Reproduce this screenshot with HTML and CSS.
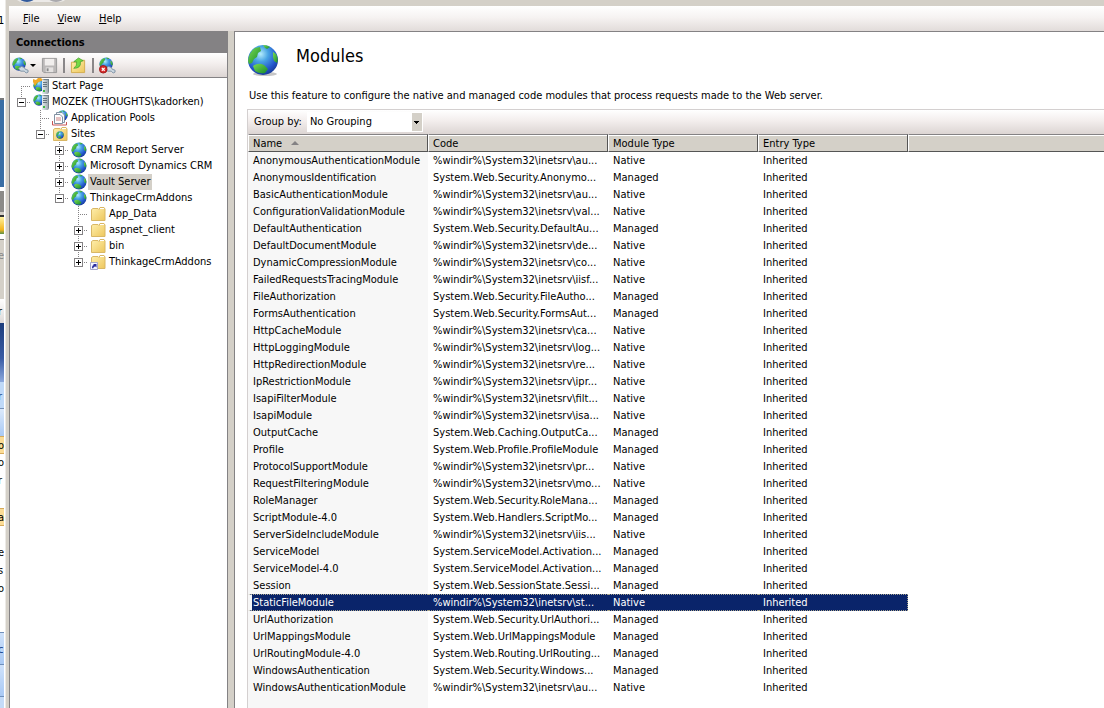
FILE: index.html
```
<!DOCTYPE html>
<html lang="en">
<head>
<meta charset="utf-8">
<title>Modules</title>
<link rel="stylesheet" href="styles.css">
</head>
<body>
<svg class="defs" aria-hidden="true">
  <defs>
    <radialGradient id="sea" cx="0.42" cy="0.3" r="0.72">
      <stop offset="0" stop-color="#b4ecfc"/><stop offset="0.35" stop-color="#48a4e4"/><stop offset="0.75" stop-color="#2456cc"/><stop offset="1" stop-color="#173a96"/>
    </radialGradient>
    <linearGradient id="land" x1="0" y1="0" x2="1" y2="1">
      <stop offset="0" stop-color="#7bdc52"/><stop offset="1" stop-color="#168a2c"/>
    </linearGradient>
    <linearGradient id="paper" x1="0" y1="0" x2="1" y2="1">
      <stop offset="0" stop-color="#fff0ae"/><stop offset="1" stop-color="#edc65c"/>
    </linearGradient>
    <linearGradient id="metal" x1="0" y1="0" x2="1" y2="0">
      <stop offset="0" stop-color="#e9eef0"/><stop offset="1" stop-color="#9fabb1"/>
    </linearGradient>
    <symbol id="globe" viewBox="0 0 32 32">
      <circle cx="16" cy="16" r="15" fill="url(#sea)"/>
      <path d="M1 17Q2 8 8 4L13 3 14 7 11 9 10 13 7 15 5 19 2 20Z" fill="url(#land)"/>
      <path d="M16 1Q20 1 23 3L20 5 18 4Z" fill="url(#land)"/>
      <path d="M26 8L29 10Q32 15 30 19L27 17 26 13Z" fill="url(#land)"/>
      <path d="M6 22Q11 18 17 21L21 25 18 29Q12 30 8 27Z" fill="url(#land)"/>
    </symbol>
    <symbol id="server" viewBox="0 0 16 16">
      <path d="M9 2L11 1H16V14L15 16H9Z" fill="#75838c"/>
      <path d="M9 2H15V16H9Z" fill="url(#metal)"/>
      <path d="M10 4.500H14M10 6.500H14M10 8.500H14" stroke="#66757e"/>
      <path d="M10 13H12" stroke="#3eb843" stroke-width="2"/>
    </symbol>
    <symbol id="folder" viewBox="0 0 16 16">
      <path d="M1.500 3.500L3 2.500H8L9 3.500 10 1.500H14L15 3V14.500H1.500Z" fill="url(#paper)" stroke="#d9b765"/>
      <path d="M10 2.500H14" stroke="#fff"/>
    </symbol>
    <symbol id="start" viewBox="0 0 16 16">
      <use href="#globe" y="1" width="13" height="13"/>
      <path d="M0 4L0 1 3 2 5 0 8 0 11 3 8 3 4 5 2 8Z" fill="#f0aa29"/>
      <use href="#server" width="16" height="16"/>
    </symbol>
    <symbol id="host" viewBox="0 0 16 16">
      <use href="#globe" width="12" height="12"/><use href="#server" width="16" height="16"/>
    </symbol>
    <symbol id="pools" viewBox="0 0 16 16">
      <use href="#globe" x="5" width="11" height="11"/>
      <path d="M4.500 2.500H10L12.500 5V12.500H4.500Z" fill="#f4f8fc" stroke="#8292a3"/>
      <path d="M2.500 4.500H8L10.500 7V13.500H2.500Z" fill="#fff" stroke="#8292a3"/>
      <path d="M4 8H9M4 10H9" stroke="#cf8585"/>
      <path d="M.5 11V15H14.500V12" fill="none" stroke="#c85454"/>
    </symbol>
    <symbol id="sites" viewBox="0 0 16 16">
      <use href="#folder" width="16" height="16"/><use href="#globe" x="4" y="5" width="8" height="8"/>
    </symbol>
    <symbol id="shortcut" viewBox="0 0 16 16">
      <use href="#folder" width="16" height="16"/>
      <path d="M.5 8.500H7.500V15.500H.5Z" fill="#f4f4ff" stroke="#a5a5c8"/>
      <path d="M2 14Q2 11 4 11L3 10H6.500V13.500L5.500 12.500Q4 12 3 14.500Z" fill="#2a2b9c"/>
    </symbol>
    <symbol id="connect" viewBox="0 0 18 18">
      <use href="#globe" width="15" height="15"/>
      <path d="M7 12L10 10 13 11 14 13 17 14 17 16 15 17 13 15 9 15Z" fill="#ccd8e2" stroke="#7f94a6"/>
    </symbol>
    <symbol id="disconnect" viewBox="0 0 18 18">
      <use href="#connect" width="18" height="18"/>
      <circle cx="4.500" cy="13" r="4" fill="#d82c2c" stroke="#9c1717"/>
      <path d="M3 11.500L6 14.500M6 11.500L3 14.500" stroke="#fff" stroke-width="1.300"/>
    </symbol>
    <symbol id="save" viewBox="0 0 18 18">
      <path d="M1.500 1.500H16.500V16.500H3L1.500 15Z" fill="#bbb8b8" stroke="#999"/>
      <path d="M4 2H14V9H4Z" fill="#f1eeed"/><path d="M5 11H13V16H5Z" fill="#e5e2e1"/><path d="M6 12H8V15H6Z" fill="#888"/>
    </symbol>
    <symbol id="up" viewBox="0 0 18 18">
      <path d="M1.500 5.500H7L8 3.500H15.500V16.500H1.500Z" fill="url(#paper)" stroke="#d3ac4c"/>
      <path d="M4 12Q8 9 7 5H4L9 1 14 4 11 5Q12 12 4 12Z" fill="#74d944" stroke="#3a9a26" stroke-width=".7"/>
    </symbol>
  </defs>
</svg>
<div class="desktop">
  <div class="behind" aria-hidden="true">
    <div class="b-top">1</div><div class="b-blue"></div><div class="b-grey"></div><div class="b-dark"></div><div class="b-yellow"></div><div class="b-beige">e</div><div class="b-pale">r</div><div class="b-navy"></div><div class="b-sky">r</div><div class="b-sky2"></div><div class="b-gold">o</div><div class="b-line">o</div><div class="b-line">r</div><div class="b-fill"></div><div class="b-gold">a</div><div class="b-fill"></div><div class="b-line">e</div><div class="b-line">s</div><div class="b-line">o</div><div class="b-gap"></div><div class="b-tail">c</div><div class="b-tail"></div><div class="b-rest"></div>
  </div>
  <div class="window">
    <div class="caption"><svg viewBox="0 0 56 6" aria-hidden="true"><path d="M8 0H56Q54 2 48 2H14Q10 2 8 0Z" fill="#eceae8"/><ellipse cx="18" cy="-3" rx="8" ry="5" fill="#315a9c"/><ellipse cx="47" cy="-3" rx="8" ry="5" fill="#aaa9ad"/></svg></div>
    <nav class="menu">
      <button type="button"><u>F</u>ile</button><button type="button"><u>V</u>iew</button><button type="button"><u>H</u>elp</button>
    </nav>
    <div class="panes">
      <aside class="connections">
        <h2>Connections</h2>
        <div class="tools">
          <button type="button" class="drop" aria-label="Connect"><svg><use href="#connect"/></svg></button>
          <button type="button" aria-label="Save" disabled><svg><use href="#save"/></svg></button>
          <i></i>
          <button type="button" aria-label="Up"><svg><use href="#up"/></svg></button>
          <i></i>
          <button type="button" aria-label="Disconnect"><svg><use href="#disconnect"/></svg></button>
        </div>
        <ul class="tree">
          <li><span class="g first"></span><svg><use href="#start"/></svg><span class="label">Start Page</span></li>
          <li><span class="g last"><button type="button" class="minus" aria-label="Collapse"></button></span><svg><use href="#host"/></svg><span class="label">MOZEK (THOUGHTS\kadorken)</span></li>
          <li class="l1"><span class="g"></span><svg><use href="#pools"/></svg><span class="label">Application Pools</span></li>
          <li class="l1"><span class="g last"><button type="button" class="minus" aria-label="Collapse"></button></span><svg><use href="#sites"/></svg><span class="label">Sites</span></li>
          <li class="l2"><span class="g"><button type="button" class="plus" aria-label="Expand"></button></span><svg><use href="#globe"/></svg><span class="label">CRM Report Server</span></li>
          <li class="l2"><span class="g"><button type="button" class="plus" aria-label="Expand"></button></span><svg><use href="#globe"/></svg><span class="label">Microsoft Dynamics CRM</span></li>
          <li class="l2"><span class="g"><button type="button" class="plus" aria-label="Expand"></button></span><svg><use href="#globe"/></svg><span class="label current">Vault Server</span></li>
          <li class="l2"><span class="g last"><button type="button" class="minus" aria-label="Collapse"></button></span><svg><use href="#globe"/></svg><span class="label">ThinkageCrmAddons</span></li>
          <li class="l3"><span class="g"></span><svg><use href="#folder"/></svg><span class="label">App_Data</span></li>
          <li class="l3"><span class="g"><button type="button" class="plus" aria-label="Expand"></button></span><svg><use href="#folder"/></svg><span class="label">aspnet_client</span></li>
          <li class="l3"><span class="g"><button type="button" class="plus" aria-label="Expand"></button></span><svg><use href="#folder"/></svg><span class="label">bin</span></li>
          <li class="l3"><span class="g last"><button type="button" class="plus" aria-label="Expand"></button></span><svg><use href="#shortcut"/></svg><span class="label">ThinkageCrmAddons</span></li>
        </ul>
      </aside>
      <main class="feature">
        <header><svg viewBox="0 0 32 34" aria-hidden="true"><ellipse cx="18" cy="30" rx="12" ry="2" fill="#c6c6c6"/><use href="#globe" width="32" height="32"/></svg><h1>Modules</h1></header>
        <p>Use this feature to configure the native and managed code modules that process requests made to the Web server.</p>
        <section class="list">
          <div class="group"><label for="grouping">Group by:</label><select id="grouping"><option>No Grouping</option></select></div>
          <table>
            <colgroup><col class="c-name"><col class="c-code"><col class="c-type"><col class="c-type"><col></colgroup>
            <thead><tr><th>Name<span class="sort"></span></th><th>Code</th><th>Module Type</th><th>Entry Type</th><th></th></tr></thead>
            <tbody>
              <tr><td>AnonymousAuthenticationModule</td><td>%windir%\System32\inetsrv\au...</td><td>Native</td><td>Inherited</td></tr>
              <tr><td>AnonymousIdentification</td><td>System.Web.Security.Anonymo...</td><td>Managed</td><td>Inherited</td></tr>
              <tr><td>BasicAuthenticationModule</td><td>%windir%\System32\inetsrv\au...</td><td>Native</td><td>Inherited</td></tr>
              <tr><td>ConfigurationValidationModule</td><td>%windir%\System32\inetsrv\val...</td><td>Native</td><td>Inherited</td></tr>
              <tr><td>DefaultAuthentication</td><td>System.Web.Security.DefaultAu...</td><td>Managed</td><td>Inherited</td></tr>
              <tr><td>DefaultDocumentModule</td><td>%windir%\System32\inetsrv\de...</td><td>Native</td><td>Inherited</td></tr>
              <tr><td>DynamicCompressionModule</td><td>%windir%\System32\inetsrv\co...</td><td>Native</td><td>Inherited</td></tr>
              <tr><td>FailedRequestsTracingModule</td><td>%windir%\System32\inetsrv\iisf...</td><td>Native</td><td>Inherited</td></tr>
              <tr><td>FileAuthorization</td><td>System.Web.Security.FileAutho...</td><td>Managed</td><td>Inherited</td></tr>
              <tr><td>FormsAuthentication</td><td>System.Web.Security.FormsAut...</td><td>Managed</td><td>Inherited</td></tr>
              <tr><td>HttpCacheModule</td><td>%windir%\System32\inetsrv\ca...</td><td>Native</td><td>Inherited</td></tr>
              <tr><td>HttpLoggingModule</td><td>%windir%\System32\inetsrv\log...</td><td>Native</td><td>Inherited</td></tr>
              <tr><td>HttpRedirectionModule</td><td>%windir%\System32\inetsrv\re...</td><td>Native</td><td>Inherited</td></tr>
              <tr><td>IpRestrictionModule</td><td>%windir%\System32\inetsrv\ipr...</td><td>Native</td><td>Inherited</td></tr>
              <tr><td>IsapiFilterModule</td><td>%windir%\System32\inetsrv\filt...</td><td>Native</td><td>Inherited</td></tr>
              <tr><td>IsapiModule</td><td>%windir%\System32\inetsrv\isa...</td><td>Native</td><td>Inherited</td></tr>
              <tr><td>OutputCache</td><td>System.Web.Caching.OutputCa...</td><td>Managed</td><td>Inherited</td></tr>
              <tr><td>Profile</td><td>System.Web.Profile.ProfileModule</td><td>Managed</td><td>Inherited</td></tr>
              <tr><td>ProtocolSupportModule</td><td>%windir%\System32\inetsrv\pr...</td><td>Native</td><td>Inherited</td></tr>
              <tr><td>RequestFilteringModule</td><td>%windir%\System32\inetsrv\mo...</td><td>Native</td><td>Inherited</td></tr>
              <tr><td>RoleManager</td><td>System.Web.Security.RoleMana...</td><td>Managed</td><td>Inherited</td></tr>
              <tr><td>ScriptModule-4.0</td><td>System.Web.Handlers.ScriptMo...</td><td>Managed</td><td>Inherited</td></tr>
              <tr><td>ServerSideIncludeModule</td><td>%windir%\System32\inetsrv\iis...</td><td>Native</td><td>Inherited</td></tr>
              <tr><td>ServiceModel</td><td>System.ServiceModel.Activation...</td><td>Managed</td><td>Inherited</td></tr>
              <tr><td>ServiceModel-4.0</td><td>System.ServiceModel.Activation...</td><td>Managed</td><td>Inherited</td></tr>
              <tr><td>Session</td><td>System.Web.SessionState.Sessi...</td><td>Managed</td><td>Inherited</td></tr>
              <tr class="selected"><td>StaticFileModule</td><td>%windir%\System32\inetsrv\st...</td><td>Native</td><td>Inherited</td></tr>
              <tr><td>UrlAuthorization</td><td>System.Web.Security.UrlAuthori...</td><td>Managed</td><td>Inherited</td></tr>
              <tr><td>UrlMappingsModule</td><td>System.Web.UrlMappingsModule</td><td>Managed</td><td>Inherited</td></tr>
              <tr><td>UrlRoutingModule-4.0</td><td>System.Web.Routing.UrlRouting...</td><td>Managed</td><td>Inherited</td></tr>
              <tr><td>WindowsAuthentication</td><td>System.Web.Security.Windows...</td><td>Managed</td><td>Inherited</td></tr>
              <tr><td>WindowsAuthenticationModule</td><td>%windir%\System32\inetsrv\au...</td><td>Native</td><td>Inherited</td></tr>
            </tbody>
          </table>
        </section>
      </main>
    </div>
  </div>
</div>
</body>
</html>
```
FILE: styles.css
```
* { box-sizing: border-box; }
body { margin: 0; color: #000; background: #fff; font: 11px/16px Tahoma, "DejaVu Sans Condensed", "Noto Sans", sans-serif; }
button, select { margin: 0; padding: 0; border: 0; background: none; color: inherit; font: inherit; }
h1, h2, p, ul { margin: 0; padding: 0; }
.defs { position: absolute; width: 0; height: 0; }
.desktop { display: flex; height: 100vh; overflow: hidden; }

.behind { flex: none; width: 5px; overflow: hidden; border-right: 1px solid #fff; display: flex; flex-direction: column; }
.behind div { flex: none; width: 5px; overflow: hidden; text-indent: -2px; line-height: 17px; }
.b-top { height: 100px; padding-top: 12px; border-bottom: 2px solid #77797c; }
.b-blue { height: 87px; background: #3a6ea5; }
.b-grey { height: 21px; margin-top: 4px; background: #8c8b88; }
.b-dark { height: 5px; background: #d4d0c8; border-bottom: 2px solid #333; }
.b-yellow { height: 17px; margin-bottom: 5px; background: linear-gradient(#fff3a0, #f4b51d 75%, #58904a); }
.b-beige { height: 60px; padding-top: 7px; background: #d4d0c8; border-top: 1px solid #777; color: #888; }
.b-pale { height: 24px; padding-top: 4px; background: linear-gradient(#fff, #ddd9d8); }
.b-navy { height: 59px; background: linear-gradient(#1c3d7c, #3a5ca4 60%, #8da9dd); }
.b-sky { height: 27px; padding-top: 6px; background: #bfd9f8; border-bottom: 1px solid #7792b8; color: #15428b; }
.b-sky2 { height: 27px; background: linear-gradient(#dceafc, #a9c9f4); }
.b-gold { height: 18px; background: #fbdc96; border: 1px solid #d5a95b; border-width: 1px 0; }
.b-line { height: 18px; }
.b-fill { height: 18px; }
.b-gap { height: 34px; }
.b-tail { height: 32px; padding-top: 8px; background: linear-gradient(#cfe2fb, #a9c9f4); border-top: 1px solid #6f8fbb; color: #15428b; }
.b-rest { height: 40px; background: #c4dbf8; border-top: 1px solid #6f8fbb; }

.window { flex: 1; min-width: 0; display: flex; flex-direction: column; padding-left: 3px; background: #d4d0c8; border-left: 1px solid #eceae6; }
.caption { flex: none; height: 6px; }
.caption svg { display: block; width: 56px; height: 6px; }
.menu { flex: none; height: 25px; display: flex; align-items: center; gap: 18px; padding-left: 14px; background: linear-gradient(#fff, #f6f3f2 45%, #e2dcda); }
.panes { flex: 1; min-height: 0; display: flex; gap: 6px; }
.connections { flex: none; width: 219px; display: flex; flex-direction: column; background: #fff; border: 1px solid #848284; border-bottom: 0; }
.connections h2 { height: 21px; padding-left: 6px; background: #848284; font-size: 11px; line-height: 22px; }
.tools { height: 25px; display: flex; align-items: center; gap: 5px; padding-left: 2px; background: linear-gradient(#fff, #f3eeed 45%, #dcd5d3); border-bottom: 1px solid #848284; }
.tools button { display: flex; align-items: center; }
.tools svg { width: 17px; height: 17px; }
.tools i { width: 2px; height: 15px; background: #8a8789; }
.drop::after { content: ""; margin-left: 1px; border: 3px solid transparent; border-top-color: #000; border-bottom: 0; }

.tree { list-style: none; padding-left: 2px; }
.tree li { display: flex; height: 16px; align-items: center; white-space: nowrap; }
.tree .l1 { padding-left: 19px; }
.tree .l2 { padding-left: 38px; }
.tree .l3 { padding-left: 57px; }
.tree svg { flex: none; width: 16px; height: 16px; margin: 0 1px 0 2px; }
.g { flex: none; display: flex; align-items: center; width: 19px; height: 16px; padding-left: 5px;
  background: repeating-linear-gradient(#848284 0 1px, transparent 1px 2px) 9px 0 / 1px 100% no-repeat,
    repeating-linear-gradient(90deg, #848284 0 1px, transparent 1px 2px) 9px 8px / 10px 1px no-repeat; }
.g.last { background-size: 1px 8px, 10px 1px; }
.g.first { background-position: 9px 8px, 9px 8px; }
.plus, .minus { width: 9px; height: 9px; border: 1px solid #848284;
  background: linear-gradient(#000, #000) center / 5px 1px no-repeat, #fff; }
.plus { background: linear-gradient(#000, #000) center / 5px 1px no-repeat, linear-gradient(#000, #000) center / 1px 5px no-repeat, #fff; }
.label { padding: 0 2px; }
.current { background: #d4d0c8; }

.feature { flex: 1; min-width: 0; display: flex; flex-direction: column; background: #fff; border: solid #848284; border-width: 1px 0 0 1px; padding-left: 12px; }
.feature header { display: flex; gap: 17px; padding-top: 12px; height: 56px; }
.feature header svg { width: 32px; height: 34px; }
.feature h1 { font-weight: 400; font-size: 18px; line-height: 24px; }
.feature p { padding-left: 2px; height: 21px; white-space: nowrap; }
.list { flex: 1; border: solid #d4d0d0; border-width: 1px 0 0 1px; background: linear-gradient(#f7f7f7, #f7f7f7) 0 0 / 180px 100% no-repeat; }
.group { height: 24px; display: flex; align-items: center; gap: 5px; padding-left: 6px; background: linear-gradient(#fff, #f3eeed 45%, #dcd5d3); }
.group select { appearance: none; width: 116px; height: 20px; padding-left: 2px; border: 1px solid #fff; border-radius: 0;
  background: linear-gradient(#000, #000) right 3px top 8px / 5px 1px no-repeat, linear-gradient(#000, #000) right 4px top 9px / 3px 1px no-repeat, linear-gradient(#000, #000) right 5px top 10px / 1px 1px no-repeat, linear-gradient(#d4d0c8, #d4d0c8) right / 10px 100% no-repeat #fff; }
table { width: 100%; table-layout: fixed; border-collapse: separate; border-spacing: 0; }
.c-name, .c-code { width: 180px; }
.c-type { width: 150px; }
th { height: 18px; padding: 0 0 0 4px; background: #d4d0c8; border: 1px solid #848284; border-color: #848284 #555 #555 #fff; box-shadow: inset 0 1px #fff; font-weight: 400; text-align: left; line-height: 15px; }
th:last-child { border-right: 0; }
td { height: 17px; padding: 0 0 0 5px; line-height: 17px; white-space: nowrap; overflow: hidden; }
.sort { display: inline-block; margin-left: 9px; border: 4px solid transparent; border-bottom-color: #848284; border-top: 0; vertical-align: 2px; }
.selected { color: #fff; }
.selected td { background: #0a246a; border: dotted #a8a48c; border-width: 1px 0; line-height: 15px; }
.selected td:first-child { background: #0a246a; border-left: 4px solid #f7f7f7; padding-left: 1px; }
.selected td:nth-child(4) { border-right-width: 1px; }
```
